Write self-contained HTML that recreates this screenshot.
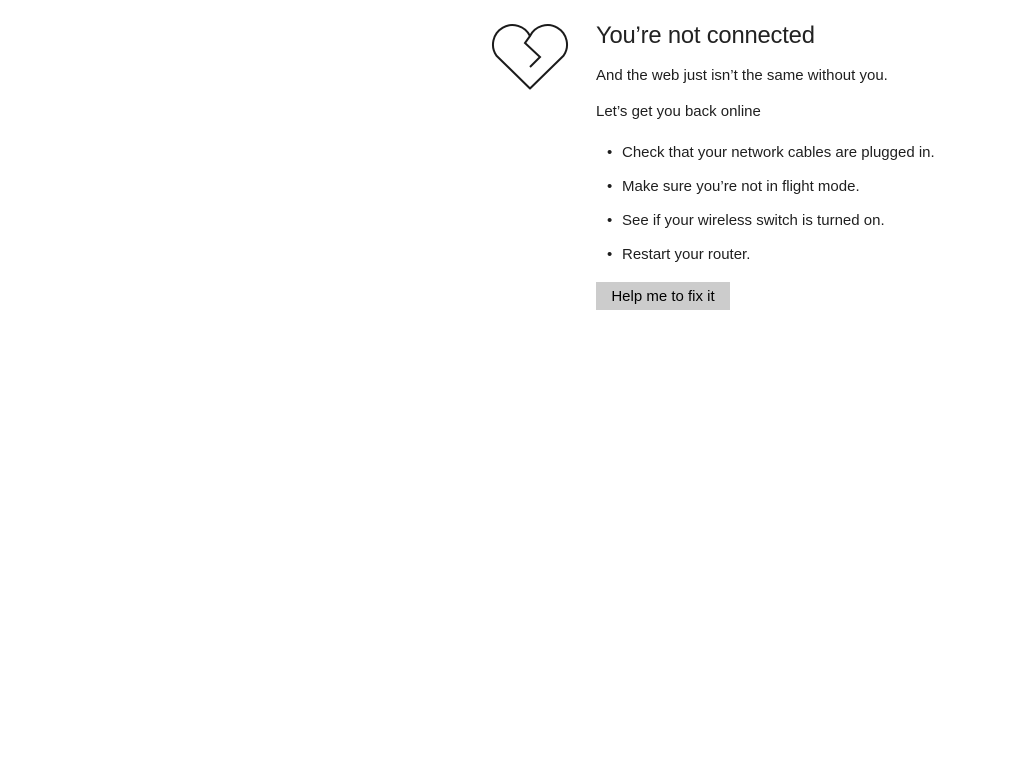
<!DOCTYPE html>
<html><head><meta charset="utf-8"><style>
html,body{margin:0;padding:0;background:#fff;width:1024px;height:768px;overflow:hidden}
body{font-family:"Liberation Sans",sans-serif;color:#1e1e1e}
.t{position:absolute;white-space:nowrap;font-size:15px;line-height:18px}
h1{position:absolute;left:596px;top:22px;margin:0;font-weight:normal;font-size:23.8px;line-height:28px;color:#222;letter-spacing:-0.2px}
.b{position:absolute;left:607px;font-size:15px}
.btn{position:absolute;left:596px;top:282px;width:134px;height:28px;background:#cccccc;font-size:15px;line-height:29px;text-align:center;color:#000}
</style></head><body>
<svg style="position:absolute;left:0;top:0" width="1024" height="120">
<path d="M530,88.5 L496.4,55.6 A19.5,19.5 0 1 1 530,36 A19.5,19.5 0 1 1 563.6,55.6 Z" fill="none" stroke="#1a1a1a" stroke-width="2" stroke-linejoin="round"/>
<path d="M530,36 L525,43 L540,57 L530,67" fill="none" stroke="#1a1a1a" stroke-width="2"/>
</svg>
<h1>You’re not connected</h1>
<div class="t" style="left:596px;top:67px">And the web just isn’t the same without you.</div>
<div class="t" style="left:596px;top:103px">Let’s get you back online</div>
<div class="t b" style="top:144px">•</div><div class="t" style="left:622px;top:144px">Check that your network cables are plugged in.</div>
<div class="t b" style="top:178px">•</div><div class="t" style="left:622px;top:178px">Make sure you’re not in flight mode.</div>
<div class="t b" style="top:212px">•</div><div class="t" style="left:622px;top:212px">See if your wireless switch is turned on.</div>
<div class="t b" style="top:246px">•</div><div class="t" style="left:622px;top:246px">Restart your router.</div>
<div class="btn">Help me to fix it</div>
</body></html>
